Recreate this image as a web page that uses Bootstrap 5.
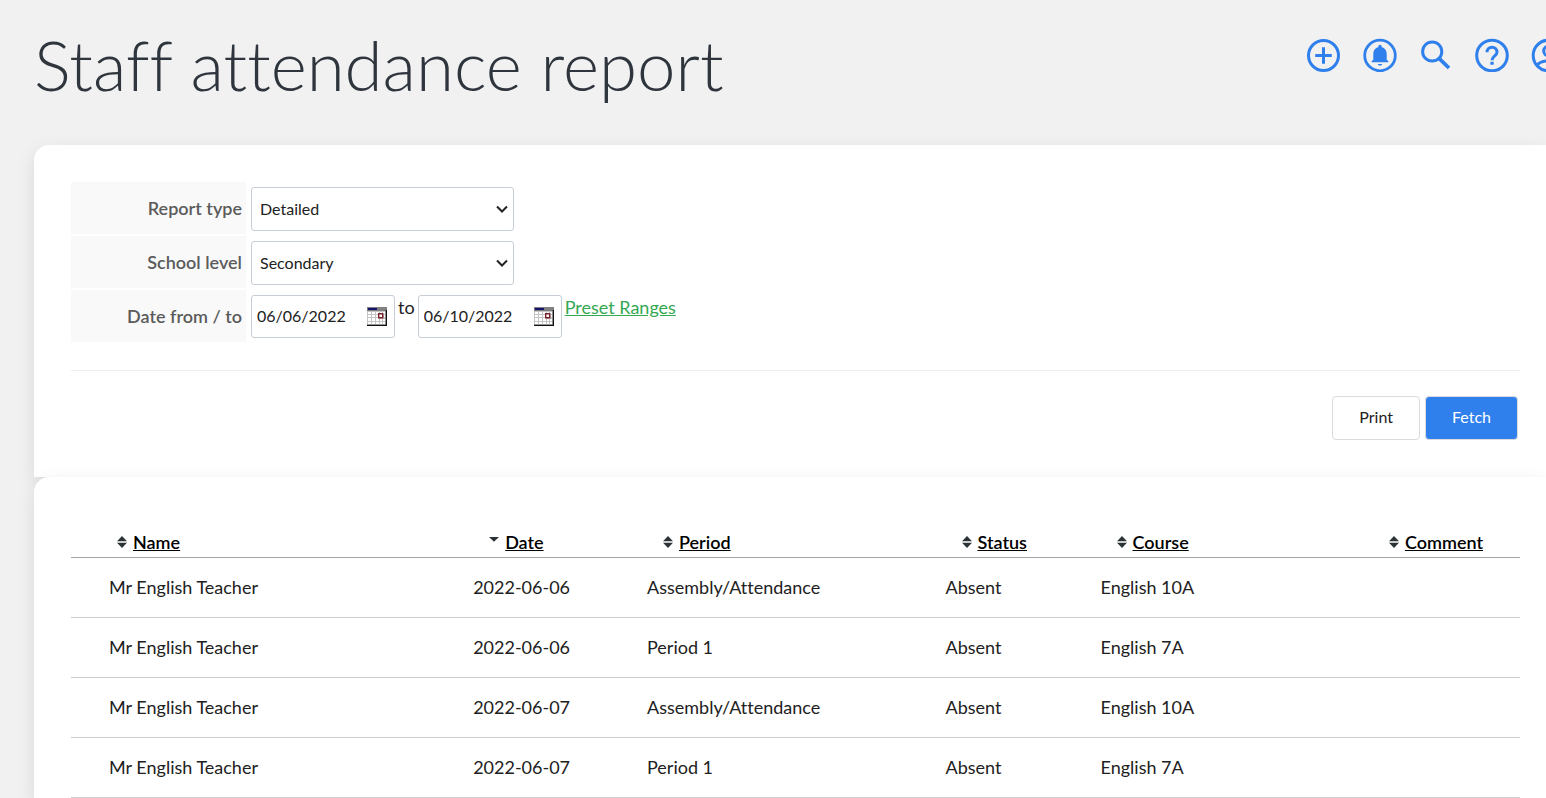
<!DOCTYPE html>
<html lang="en">
<head>
<meta charset="utf-8">
<meta name="viewport" content="width=device-width, initial-scale=1">
<title>Staff attendance report</title>
<link href="https://cdn.jsdelivr.net/npm/bootstrap@5.3.0/dist/css/bootstrap.min.css" rel="stylesheet">
<style>
body { font-family: Lato, "Liberation Sans", sans-serif; font-size: 18px; line-height: 24px; font-variant-ligatures: none; color: #212121; background: #f1f1f1; overflow-x: hidden; }
.page-shell { padding-left: 34px; }
.page-top { height: 145px; padding-top: 23px; }
.page-title { font-size: 69px; line-height: 84px; font-weight: 300; color: #2f353d; }
.top-actions { gap: 22px; margin: 15px -19px 0 0; }
.top-actions button { width: 34px; height: 34px; color: #2f80ed; }
.top-actions svg { display: block; width: 34px; height: 34px; }
.panel { background: #fff; padding: 37px 26px 0 37px; box-shadow: 0 6px 18px rgba(0,0,0,.1); border-radius: 15px 0 0 0; }
.panel-filter { padding-bottom: 37px; }
.filter-row { height: 52px; margin-bottom: 2px; }
.filter-label { width: 175px; background: #f9f9f9; color: #5b5b5b; font-weight: 600; text-align: right; padding: 14px 4px 14px 0; margin-right: 5px; }
.filter-row .form-select, .filter-row .form-control { border-color: #c7cdd4; border-radius: 3px; font-size: 16px; color: #212121; }
.filter-row .form-select { width: 263px; height: 44px; margin-top: 5px; padding: 0 30px 0 8px; background-size: 12px 12px; background-position: right 5px center; background-image: url("data:image/svg+xml,%3csvg xmlns='http://www.w3.org/2000/svg' viewBox='0 0 12 12'%3e%3cpath fill='none' stroke='%23222' stroke-width='2' d='M1 3.5l5 5 5-5'/%3e%3c/svg%3e"); }
.date-box { width: 144px; margin-top: 5px; }
.date-box .form-control { height: 43px; padding: 0 32px 2px 5px; }
.date-box button { position: absolute; right: 8px; top: 12px; width: 20px; height: 19px; }
.date-box svg { display: block; }
.date-side { padding: 5px 3px 0; }
.preset { color: #34a853; }
.rule { border-top: 1px solid #ececec; margin-top: 28px; padding: 25px 2px 0 0; gap: 5px; }
.rule .btn { height: 44px; font-size: 16px; border: 1px solid #dcdcdc; border-radius: 4px; padding: 0 26px 2px; color: #212121; background: #fff; }
.rule .btn-fetch { color: #fff; background: #2f80ed; }
.report { table-layout: fixed; width: 100%; }
.report th { height: 43px; vertical-align: bottom; padding: 0 0 3px 52px; font-weight: 600; border-bottom: 1px solid #a6a6a6; white-space: nowrap; }
.report th:first-child { padding-left: 45px; }
.report th a { color: #000; }
.report td { height: 60px; padding: 0 0 0 37px; border-bottom: 1px solid #ccc; white-space: nowrap; }
.report td:first-child { padding-left: 38px; }
.report th svg { width: 12px; height: 12px; margin: 0 5px 4px 0; fill: #2b3337; }
</style>
<script src="https://cdn.jsdelivr.net/npm/bootstrap@5.3.0/dist/js/bootstrap.bundle.min.js"></script>
</head>
<body>
<svg width="0" height="0" class="position-absolute" aria-hidden="true">
  <symbol id="sort-both" viewBox="0 0 12 12"><path d="M1 5.200L6 0l5 5.200zM1 6.800h10L6 12z"/></symbol>
  <symbol id="sort-down" viewBox="0 0 12 12"><path d="M1 1h10L6 5.700z"/></symbol>
  <symbol id="calendar" viewBox="0 0 20 19">
    <path fill="#c4c4c4" d="M0 0h20v19H0z"/>
    <path fill="#fff" d="M1 5h3v2H1zm4 0h3v2H5zm4 0h3v2H9zm4 0h2v2h-2zm3 0h2v2h-2zM1 8h3v2H1zm4 0h3v2H5zm4 0h2v2H9zm8 0h1v2h-1zM1 11h3v3H1zm4 0h3v3H5zm4 0h3v3H9zm4 1h2v2h-2zm3 0h2v2h-2zM1 15h3v2H1zm4 0h3v2H5zm4 0h3v2H9zm4 0h2v2h-2zm3 0h2v2h-2z"/>
    <path fill="#808080" d="M0 0h20v4H0z"/><path fill="#14146e" d="M1 1h9v2H1z"/>
    <path fill="#fff" stroke="#7a2028" stroke-width="1.4" d="M11.700 6.700h4v4h-4z"/>
    <path fill="#111" d="M18.700 3H20v16H0v-1.200h18.700z"/>
  </symbol>
</svg>
<div class="page-shell">
  <header class="page-top d-flex justify-content-between align-items-start">
    <h1 class="page-title m-0 text-nowrap">Staff attendance report</h1>
    <nav class="top-actions d-flex flex-shrink-0" aria-label="Quick actions">
      <button type="button" class="border-0 bg-transparent p-0" aria-label="Add"><svg viewBox="0 0 34 34" fill="none" stroke="currentColor" stroke-width="3"><circle cx="16.500" cy="17.500" r="15"/><path d="M16.500 9.200v16.600M8.200 17.500h16.600"/></svg></button>
      <button type="button" class="border-0 bg-transparent p-0" aria-label="Notifications"><svg viewBox="0 0 34 34"><circle cx="17" cy="17.500" r="15.300" fill="none" stroke="currentColor" stroke-width="2.800"/><path fill="currentColor" d="M15.300 8.400a1.700 1.700 0 0 1 3.400 0v.5c3.200.9 5 3.500 5 6.800v6l1.700 1.600v1H8.600v-1l1.700-1.600v-6c0-3.300 1.800-5.900 5-6.800zM14.800 26h4.400c-.3 2.300-4.100 2.300-4.400 0z"/></svg></button>
      <button type="button" class="border-0 bg-transparent p-0" aria-label="Search"><svg viewBox="0 0 34 34" fill="none" stroke="currentColor"><circle cx="13.200" cy="13.500" r="9.600" stroke-width="3"/><path stroke-width="3.800" d="M20 20.300l10 9.700"/></svg></button>
      <button type="button" class="border-0 bg-transparent p-0" aria-label="Help"><svg viewBox="0 0 34 34" fill="none" stroke="currentColor" stroke-width="3"><circle cx="17" cy="17.500" r="15.300"/><path d="M12 14.200a5 5 0 1 1 10 0c0 3.600-5 3.700-5 8M15.400 25.300h3.300"/></svg></button>
      <button type="button" class="border-0 bg-transparent p-0" aria-label="Account"><svg viewBox="0 0 34 34" fill="none" stroke="currentColor" stroke-width="3"><circle cx="17.500" cy="17.500" r="15.300"/><circle cx="17.500" cy="13" r="4.800"/><path d="M6.500 27c4-5.500 18-5.500 22 0"/></svg></button>
    </nav>
  </header>
  <main>
    <section class="panel panel-filter">
      <form>
        <div class="filter-row d-flex align-items-start">
          <label class="filter-label" for="type">Report type</label>
          <select id="type" class="form-select"><option>Detailed</option></select>
        </div>
        <div class="filter-row d-flex align-items-start">
          <label class="filter-label" for="level">School level</label>
          <select id="level" class="form-select"><option>Secondary</option></select>
        </div>
        <div class="filter-row d-flex align-items-start">
          <label class="filter-label" for="from">Date from / to</label>
          <div class="date-box position-relative">
            <input id="from" class="form-control" type="text" value="06/06/2022">
            <button type="button" class="border-0 bg-transparent p-0" aria-label="Choose start date"><svg width="20" height="19"><use href="#calendar"/></svg></button>
          </div>
          <label class="date-side" for="to">to</label>
          <div class="date-box position-relative">
            <input id="to" class="form-control" type="text" value="06/10/2022">
            <button type="button" class="border-0 bg-transparent p-0" aria-label="Choose end date"><svg width="20" height="19"><use href="#calendar"/></svg></button>
          </div>
          <div class="date-side"><a class="preset" href="#">Preset Ranges</a></div>
        </div>
        <div class="rule d-flex justify-content-end">
          <button type="button" class="btn">Print</button>
          <button type="submit" class="btn btn-fetch">Fetch</button>
        </div>
      </form>
    </section>
    <section class="panel position-relative">
      <table class="report">
        <colgroup><col style="width:25.200%"><col style="width:12%"><col style="width:20.600%"><col style="width:10.700%"><col style="width:18.800%"><col></colgroup>
        <thead><tr>
          <th><svg><use href="#sort-both"/></svg><a href="#">Name</a></th>
          <th><svg><use href="#sort-down"/></svg><a href="#">Date</a></th>
          <th><svg><use href="#sort-both"/></svg><a href="#">Period</a></th>
          <th><svg><use href="#sort-both"/></svg><a href="#">Status</a></th>
          <th><svg><use href="#sort-both"/></svg><a href="#">Course</a></th>
          <th><svg><use href="#sort-both"/></svg><a href="#">Comment</a></th>
        </tr></thead>
        <tbody>
          <tr><td>Mr English Teacher</td><td>2022-06-06</td><td>Assembly/Attendance</td><td>Absent</td><td>English 10A</td><td></td></tr>
          <tr><td>Mr English Teacher</td><td>2022-06-06</td><td>Period 1</td><td>Absent</td><td>English 7A</td><td></td></tr>
          <tr><td>Mr English Teacher</td><td>2022-06-07</td><td>Assembly/Attendance</td><td>Absent</td><td>English 10A</td><td></td></tr>
          <tr><td>Mr English Teacher</td><td>2022-06-07</td><td>Period 1</td><td>Absent</td><td>English 7A</td><td></td></tr>
        </tbody>
      </table>
    </section>
  </main>
</div>
</body>
</html>
